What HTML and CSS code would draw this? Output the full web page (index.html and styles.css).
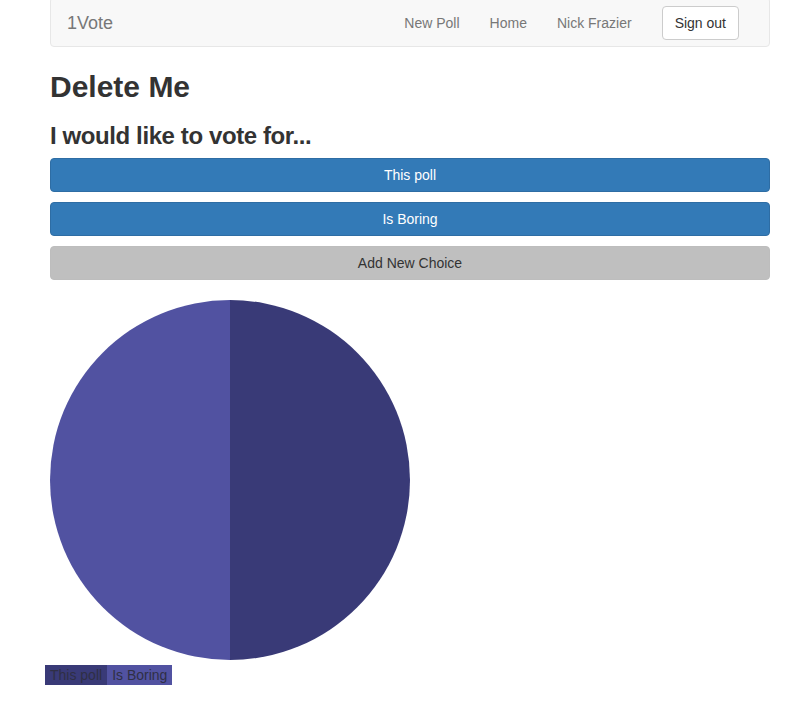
FILE: index.html
```html
<!DOCTYPE html>
<html>
<head>
<meta charset="utf-8">
<link rel="stylesheet" href="styles.css">
</head>
<body>
<div class="page">
  <nav class="navbar">
    <a class="brand">1Vote</a>
    <div class="nav-right">
      <a class="nav-link">New Poll</a>
      <a class="nav-link">Home</a>
      <a class="nav-link">Nick Frazier</a>
      <button class="btn btn-default">Sign out</button>
    </div>
  </nav>
  <h2 class="title">Delete Me</h2>
  <h3 class="subtitle">I would like to vote for...</h3>
  <div class="choices">
    <button class="btn btn-primary btn-block">This poll</button>
    <button class="btn btn-primary btn-block">Is Boring</button>
    <button class="btn btn-gray btn-block">Add New Choice</button>
  </div>
  <div class="chart">
    <svg width="360" height="360" viewBox="0 0 360 360">
      <path d="M180 0 A180 180 0 0 0 180 360 Z" fill="#5152a1"/>
      <path d="M180 0 A180 180 0 0 1 180 360 Z" fill="#393a77"/>
    </svg>
  </div>
  <div class="legend">
    <span class="legend-item l1">This poll</span><span class="legend-item l2">Is Boring</span>
  </div>
</div>
</body>
</html>
```
FILE: styles.css
```css
* { box-sizing: border-box; }
html, body { margin: 0; padding: 0; background: #fff; }
body {
  font-family: "Liberation Sans", Arial, sans-serif;
  font-size: 14px;
  line-height: 20px;
  color: #333;
}
.page {
  width: 720px;
  margin-left: 50px;
}
.navbar {
  margin-top: -3px;
  height: 50px;
  background: #f8f8f8;
  border: 1px solid #e7e7e7;
  border-radius: 4px;
  display: flex;
  align-items: flex-start;
  justify-content: space-between;
  padding: 0 30px 0 16px;
  margin-bottom: 23px;
}
.brand {
  font-size: 18px;
  line-height: 20px;
  padding: 15px 0;
  color: #777;
}
.nav-right {
  display: flex;
  align-items: flex-start;
}
.nav-link {
  color: #777;
  padding: 15px 15px;
  line-height: 20px;
}
.nav-right .btn-default {
  margin-top: 8px;
  margin-left: 15px;
}
.btn {
  font-family: inherit;
  font-size: 14px;
  line-height: 20px;
  padding: 6px 12px;
  border: 1px solid transparent;
  border-radius: 4px;
  cursor: pointer;
}
.btn-default {
  background: #fff;
  border-color: #ccc;
  color: #333;
}
.btn-primary {
  background: #337ab7;
  border-color: #2e6da4;
  color: #fff;
}
.btn-gray {
  background: #bfbfbf;
  border-color: #bdbdbd;
  color: #333;
}
.btn-block {
  display: block;
  width: 100%;
}
.title {
  font-size: 30px;
  line-height: 33px;
  font-weight: 700;
  margin: 0 0 10px;
}
.subtitle {
  font-size: 24px;
  line-height: 26px;
  font-weight: 700;
  letter-spacing: -0.4px;
  margin: 20px 0 9px;
}
.choices {
  display: flex;
  flex-direction: column;
  gap: 10px;
}
.chart {
  margin-top: 20px;
  height: 360px;
}
.chart svg { display: block; }
.legend {
  margin-top: 5px;
  margin-left: -5px;
  display: flex;
}
.legend-item {
  padding: 0 5px;
  line-height: 20px;
  color: #2f2f45;
}
.l1 { background: #393a77; }
.l2 { background: #5152a1; }
```
